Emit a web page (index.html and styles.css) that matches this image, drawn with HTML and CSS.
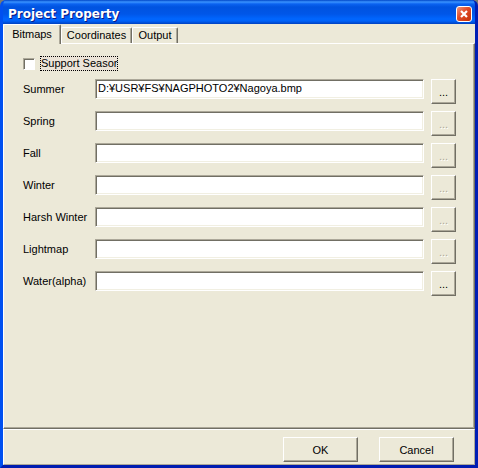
FILE: index.html
```
<!DOCTYPE html>
<html lang="en">
<head>
<meta charset="utf-8">
<title>Project Property</title>
<link rel="stylesheet" href="styles.css">
</head>
<body>
<form class="window">
  <header class="titlebar">
    <h1>Project Property</h1>
    <button type="button" class="close" aria-label="Close"><svg viewBox="0 0 14 14" width="14" height="14"><path d="M4 4l6 6M10 4l-6 6" stroke="#fff" stroke-width="2.2" fill="none"/></svg></button>
  </header>
  <main class="client">
    <nav class="tabs" role="tablist">
      <button type="button" role="tab" class="tab active" aria-selected="true">Bitmaps</button>
      <button type="button" role="tab" class="tab tab-wide">Coordinates</button>
      <button type="button" role="tab" class="tab">Output</button>
    </nav>
    <section class="panel">
      <div class="check">
        <input type="checkbox" id="season"><label for="season">Support Seasor</label>
      </div>
      <div class="row"><label for="summer">Summer</label><input type="text" id="summer" value="D:¥USR¥FS¥NAGPHOTO2¥Nagoya.bmp"><button type="button" class="btn browse">...</button></div>
      <div class="row"><label for="spring">Spring</label><input type="text" id="spring"><button type="button" class="btn browse" disabled>...</button></div>
      <div class="row"><label for="fall">Fall</label><input type="text" id="fall"><button type="button" class="btn browse" disabled>...</button></div>
      <div class="row"><label for="winter">Winter</label><input type="text" id="winter"><button type="button" class="btn browse" disabled>...</button></div>
      <div class="row"><label for="harsh">Harsh Winter</label><input type="text" id="harsh"><button type="button" class="btn browse" disabled>...</button></div>
      <div class="row"><label for="light">Lightmap</label><input type="text" id="light"><button type="button" class="btn browse" disabled>...</button></div>
      <div class="row"><label for="water">Water(alpha)</label><input type="text" id="water"><button type="button" class="btn browse">...</button></div>
    </section>
    <footer class="actions">
      <button type="button" class="btn action">OK</button>
      <button type="button" class="btn action">Cancel</button>
    </footer>
  </main>
</form>
</body>
</html>
```
FILE: styles.css
```
* { box-sizing: border-box; }
body {
  margin: 0;
  background: #7b7b70;
  color: #000;
  font: 11px/16px "Liberation Sans", "Noto Sans CJK JP", sans-serif;
}
button, input { font: inherit; color: inherit; margin: 0; padding: 0; }
.window {
  display: flex;
  flex-direction: column;
  min-height: 100vh;
  border: solid;
  border-width: 0 3px 3px;
  border-color: #0042e0 #001eb4 #001cb0 #0050f0;
  border-radius: 6px 6px 0 0;
  background: #0055ea;
  overflow: hidden;
}
.titlebar {
  display: flex;
  align-items: center;
  justify-content: space-between;
  height: 24px;
  margin: 0 -3px;
  padding: 3px 6px 0 8px;
  background: linear-gradient(#0046c8 0, #3a93ff 2px, #0a62f0 4px, #0053e0 7px, #0056e8 14px, #0066ff 19px, #0062f8 21px, #0040c0 24px);
}
h1 {
  margin: 0;
  font: bold 12px/16px "DejaVu Sans", sans-serif;
  color: #fff;
  text-shadow: 1px 1px #0a1883;
}
.close {
  width: 16px;
  height: 16px;
  border: 1px solid #fff;
  border-radius: 3px;
  background: linear-gradient(135deg, #f0957c, #e04a26 45%, #c33106);
}
.close svg { display: block; }
.client { flex: 1; display: flex; flex-direction: column; background: #ece9d8; }
.tabs { display: flex; align-items: flex-end; height: 19px; }
.tab {
  height: 16px;
  padding: 0 3px;
  border: solid;
  border-width: 1px 1px 0 1px;
  border-color: #fff #716f64 #fff #fff;
  border-radius: 2px 2px 0 0;
  background: #ece9d8;
  box-shadow: inset -1px 0 #aca899;
  line-height: 15px;
  min-width: 46px;
}
.tab-wide { min-width: 71px; }
.tab.active {
  position: relative;
  z-index: 1;
  height: 20px;
  min-width: 58px;
  margin-bottom: -1px;
}
.panel {
  flex: 1;
  padding: 12px 18px 0 19px;
  border: 1px solid;
  border-color: #fff #716f64 #716f64 #fff;
  box-shadow: inset -1px -1px #aca899;
}
.check { display: flex; align-items: center; height: 15px; margin-bottom: 8px; }
.check input {
  appearance: none;
  width: 12px;
  height: 12px;
  margin-right: 5px;
  border: 1px solid;
  border-color: #aca899 #fff #fff #aca899;
  background: #fff;
  box-shadow: inset 1px 1px #716f64;
}
.check label { height: 15px; line-height: 13px; border: 1px dotted #000; background: #ece4d8; }
.row { display: flex; align-items: flex-start; height: 25px; margin-bottom: 7px; }
.row label { width: 72px; line-height: 20px; white-space: nowrap; }
.row input {
  flex: 1;
  min-width: 0;
  height: 20px;
  margin-right: 7px;
  padding: 0 2px 2px;
  border: 1px solid;
  border-color: #aca899 #fff #fff #aca899;
  background: #fff;
  box-shadow: inset 1px 1px #716f64, inset -1px -1px #f1efe2;
}
.btn {
  height: 25px;
  border: 1px solid;
  border-color: #fff #716f64 #716f64 #fff;
  background: #ece9d8;
  box-shadow: inset -1px -1px #aca899;
}
.browse { width: 25px; }
.browse:disabled { color: #aca899; text-shadow: 1px 1px #fff; }
.actions {
  display: flex;
  justify-content: flex-end;
  gap: 21px;
  padding: 7px 20px 2px;
  border: 1px solid;
  border-color: #fff #aca899 #aca899 #fff;
}
.action { width: 75px; }
```
